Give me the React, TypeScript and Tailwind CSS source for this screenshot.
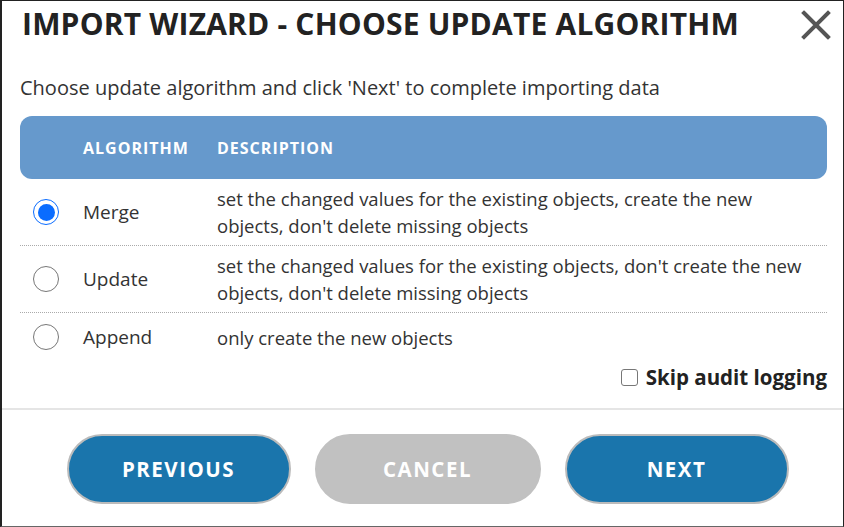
import React from "react";

const rows = [
  { name: "Merge", desc: ["set the changed values for the existing objects, create the new", "objects, don't delete missing objects"], checked: true },
  { name: "Update", desc: ["set the changed values for the existing objects, don't create the new", "objects, don't delete missing objects"], checked: false },
  { name: "Append", desc: ["only create the new objects"], checked: false },
];

export default function App() {
  return (
    <div className="w-[844px] h-[527px] bg-white border-l-2 border-t border-r border-b border-l-[#222] border-t-[#222] border-r-[#222] border-b-[#666] flex flex-col text-[#333]" style={{ fontFamily: '"Open Sans", "Noto Sans", sans-serif' }}>
      <div className="flex items-start justify-between pl-[20px] pr-[12px] pt-[3px]">
        <h1 className="text-[30px] font-bold text-[#222] leading-[40px] tracking-[0.2px]">IMPORT WIZARD - CHOOSE UPDATE ALGORITHM</h1>
        <svg width="30" height="30" viewBox="0 0 30 30" className="mt-[6px]">
          <path d="M3 3 L27 27 M27 3 L3 27" stroke="#555" strokeWidth="4" strokeLinecap="square" />
        </svg>
      </div>
      <p className="pl-[18px] mt-[31px] text-[20px] leading-[26px] text-[#333]">Choose update algorithm and click 'Next' to complete importing data</p>
      <div className="ml-[18px] mr-[16px] mt-[15px]">
        <div className="h-[63px] bg-[#6699cc] rounded-[12px] flex items-center text-white font-bold text-[16px] tracking-[1px] pt-[1px]">
          <div className="w-[63px]" />
          <div className="w-[134px]">ALGORITHM</div>
          <div>DESCRIPTION</div>
        </div>
        {rows.map((r, i) => (
          <div key={r.name} className={`flex items-center ${i < 2 ? "h-[67px] border-b border-dotted border-[#aaa]" : "h-[48px]"}`}>
            <div className="w-[63px] flex justify-start pl-[13px]">
              {r.checked ? (
                <div className="w-[26px] h-[26px] rounded-full border-[1.5px] border-[#0a6cff] flex items-center justify-center">
                  <div className="w-[17px] h-[17px] rounded-full bg-[#0a6cff]" />
                </div>
              ) : (
                <div className="w-[26px] h-[26px] rounded-full border-[1.5px] border-[#777]" />
              )}
            </div>
            <div className="w-[134px] text-[19px]">{r.name}</div>
            <div className="text-[18.5px] leading-[27px]">
              {r.desc.map((d) => (
                <div key={d}>{d}</div>
              ))}
            </div>
          </div>
        ))}
        <div className="flex justify-end items-center gap-[8px] mt-[2px]">
          <div className="w-[17px] h-[17px] rounded-[3px] border border-[#777] bg-white" />
          <span className="text-[20.5px] leading-[28px] font-bold text-[#222]">Skip audit logging</span>
        </div>
      </div>
      <div className="mt-[17px] h-[2px] bg-[#e5e5e5]" />
      <div className="flex-1 flex items-center justify-center gap-[24px] pl-[10px] pt-[1px]">
        <button className="w-[224px] h-[70px] rounded-full bg-[#1a75ac] border-2 border-[#bbb] text-white font-bold text-[20.5px] tracking-[1.5px] pt-[2px]">PREVIOUS</button>
        <button className="w-[226px] h-[70px] rounded-full bg-[#c1c1c1] border-2 border-[#c1c1c1] text-white font-bold text-[20.5px] tracking-[1.5px] pt-[2px]">CANCEL</button>
        <button className="w-[224px] h-[70px] rounded-full bg-[#1a75ac] border-2 border-[#bbb] text-white font-bold text-[20.5px] tracking-[1.5px] pt-[2px]">NEXT</button>
      </div>
    </div>
  );
}
